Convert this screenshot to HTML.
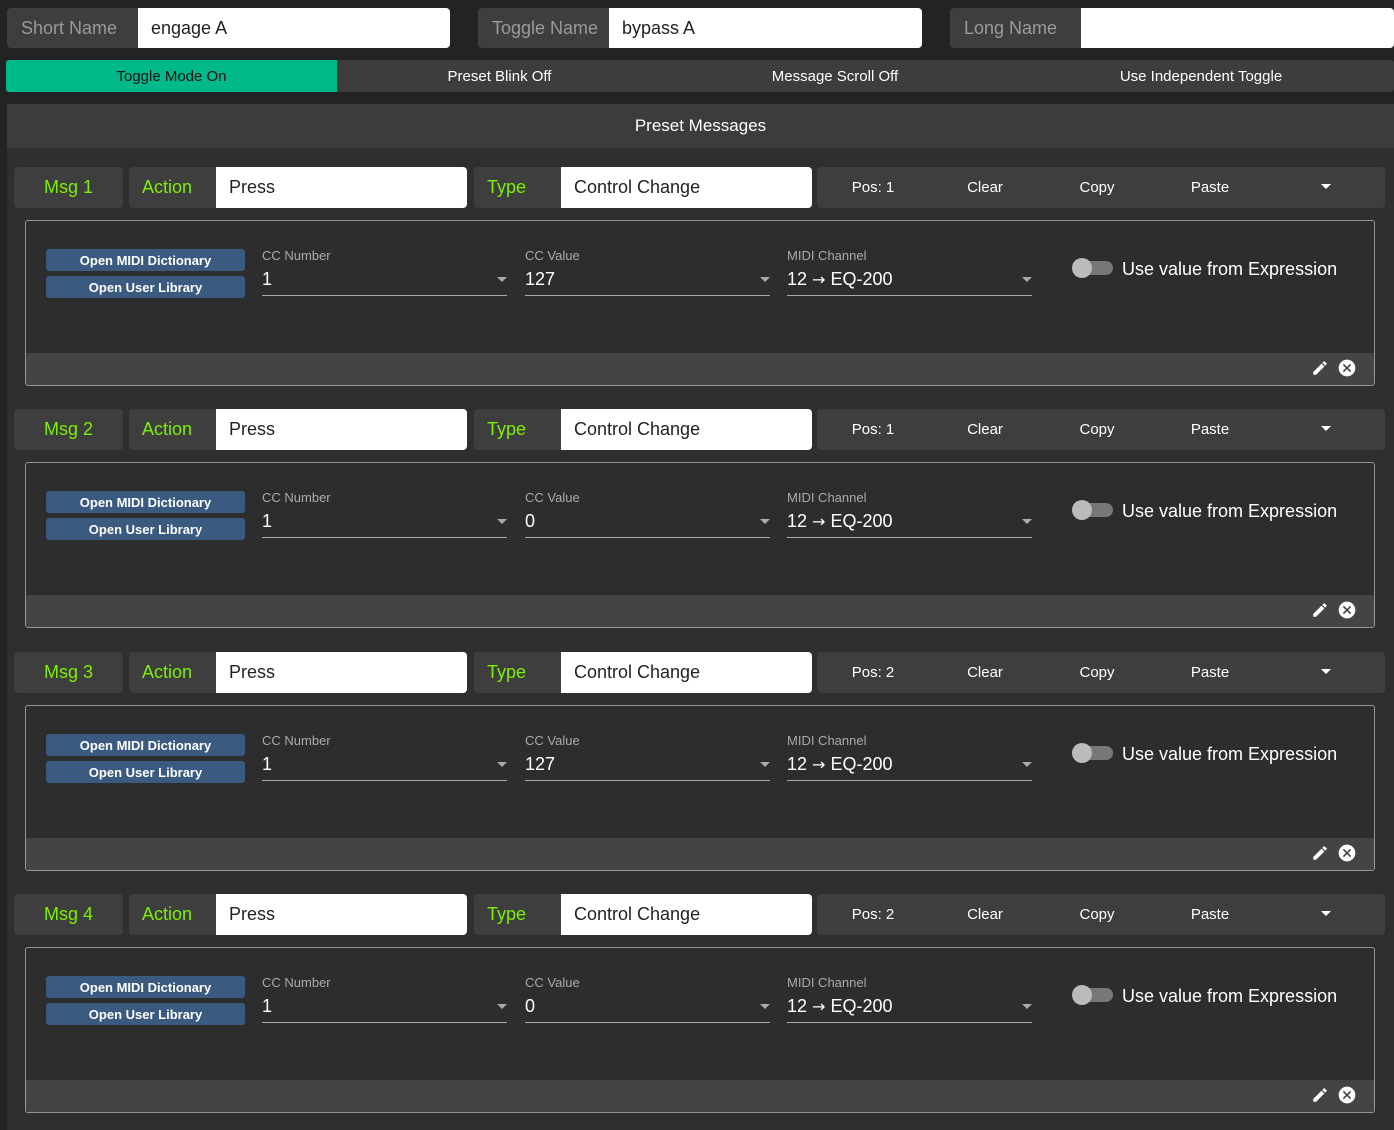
<!DOCTYPE html>
<html><head><meta charset="utf-8"><style>
*{box-sizing:border-box;margin:0;padding:0}
body{width:1394px;height:1130px;background:#232323;font-family:"Liberation Sans",sans-serif;position:relative;overflow:hidden}
.a{position:absolute}
.lbl{position:absolute;background:#3e3e3e;border-radius:4px;color:#9a9a9a;font-size:18px;display:flex;align-items:center;padding-left:14px}
.inp{position:absolute;background:#fff;border-radius:0 4px 4px 0;color:#222;font-size:18px;display:flex;align-items:center;padding-left:13px}
.tb{position:absolute;top:60px;height:32px;display:flex;align-items:center;justify-content:center;font-size:15px;color:#fff}
.blk{position:absolute;left:0;width:1394px;height:220px}
.g{color:#7cf000;justify-content:center;padding-left:0}
.bar{position:absolute;left:817px;top:0;width:568px;height:41px;background:#3e3e3e;border-radius:4px;color:#fff;font-size:15px}
.bar span{position:absolute;top:12px;transform:translateX(-50%)}
.box{position:absolute;left:25px;top:53px;width:1350px;height:166px;border:1px solid #8f959c;border-radius:3px;background:#2d2d2d;overflow:hidden}
.ft{position:absolute;left:0;bottom:0;width:100%;height:32px;background:#444}
.btn{position:absolute;left:20px;width:199px;height:22px;background:#3a5a80;border-radius:3px;color:#fff;font-size:13px;font-weight:bold;display:flex;align-items:center;justify-content:center}
.fld{position:absolute;top:25px;width:245px;height:50px;border-bottom:1px solid #aaa}
.fld .l{position:absolute;top:2px;left:0;font-size:13px;color:#aaa}
.fld .v{position:absolute;top:23px;left:0;font-size:18px;color:#fff}
.fld .v b{font-family:"DejaVu Sans",sans-serif;font-weight:normal;font-size:16px}
.fld .ar{position:absolute;right:0;top:31px;width:0;height:0;border-left:5px solid transparent;border-right:5px solid transparent;border-top:5px solid #aaa}
.tg{position:absolute;left:1047px;top:40px;width:40px;height:14px;border-radius:7px;background:#777}
.tg:before{content:"";position:absolute;left:-1px;top:-3px;width:20px;height:20px;border-radius:50%;background:#bbb}
.tt{position:absolute;left:1096px;top:38px;font-size:18px;color:#fff}
.act{justify-content:flex-start;padding-left:13px}
</style></head><body>
<div class="lbl" style="left:7px;top:8px;width:140px;height:40px;">Short Name</div>
<div class="inp" style="left:138px;top:8px;width:312px;height:40px;">engage A</div>
<div class="lbl" style="left:478px;top:8px;width:140px;height:40px;">Toggle Name</div>
<div class="inp" style="left:609px;top:8px;width:313px;height:40px;">bypass A</div>
<div class="lbl" style="left:950px;top:8px;width:140px;height:40px;">Long Name</div>
<div class="inp" style="left:1081px;top:8px;width:313px;height:40px;"></div>

<div class="a" style="left:6px;top:60px;width:1388px;height:32px;background:#3d3d3d;border-radius:3px"></div>
<div class="tb" style="left:6px;width:331px;background:#00b98a;color:#111;border-radius:3px 0 0 3px">Toggle Mode On</div>
<div class="tb" style="left:337px;width:325px">Preset Blink Off</div>
<div class="tb" style="left:670px;width:330px">Message Scroll Off</div>
<div class="tb" style="left:1010px;width:382px">Use Independent Toggle</div>

<div class="a" style="left:7px;top:104px;width:1387px;height:1026px;background:#2f2f2f"></div>
<div class="a" style="left:7px;top:104px;width:1387px;height:44px;background:#3c3c3c;color:#fff;font-size:17px;display:flex;align-items:center;justify-content:center">Preset Messages</div>

<div class="blk" style="top:167px">
<div class="lbl g" style="left:14px;top:0;width:109px;height:41px">Msg 1</div>
<div class="lbl g act" style="left:129px;top:0;width:95px;height:41px">Action</div>
<div class="inp" style="left:216px;top:0;width:251px;height:41px">Press</div>
<div class="lbl g act" style="left:474px;top:0;width:95px;height:41px">Type</div>
<div class="inp" style="left:561px;top:0;width:251px;height:41px">Control Change</div>
<div class="bar"><span style="left:56px">Pos: 1</span><span style="left:168px">Clear</span><span style="left:280px">Copy</span><span style="left:393px">Paste</span><i class="a" style="left:504px;top:17px;border-left:5px solid transparent;border-right:5px solid transparent;border-top:5px solid #fff"></i></div>
<div class="box">
<div class="btn" style="top:28px">Open MIDI Dictionary</div>
<div class="btn" style="top:55px">Open User Library</div>
<div class="fld" style="left:236px"><div class="l">CC Number</div><div class="v">1</div><i class="ar"></i></div>
<div class="fld" style="left:499px"><div class="l">CC Value</div><div class="v">127</div><i class="ar"></i></div>
<div class="fld" style="left:761px"><div class="l">MIDI Channel</div><div class="v">12 <b>→</b> EQ-200</div><i class="ar"></i></div>
<div class="tg"></div><div class="tt">Use value from Expression</div>
<div class="ft"><svg class="a" style="left:1285px;top:6px" width="18" height="18" viewBox="0 0 24 24"><path fill="#fff" d="M3 17.25V21h3.75L17.81 9.94l-3.75-3.75L3 17.25zM20.71 7.04a1 1 0 000-1.41l-2.34-2.34a1 1 0 00-1.41 0l-1.83 1.83 3.75 3.75 1.83-1.83z"/></svg><svg class="a" style="left:1311px;top:5px" width="20" height="20" viewBox="0 0 24 24"><path fill="#fff" d="M12 2a10 10 0 100 20 10 10 0 000-20zm5 13.59L15.59 17 12 13.41 8.41 17 7 15.59 10.59 12 7 8.41 8.41 7 12 10.59 15.59 7 17 8.41 13.41 12 17 15.59z"/></svg></div>
</div></div>

<div class="blk" style="top:409px">
<div class="lbl g" style="left:14px;top:0;width:109px;height:41px">Msg 2</div>
<div class="lbl g act" style="left:129px;top:0;width:95px;height:41px">Action</div>
<div class="inp" style="left:216px;top:0;width:251px;height:41px">Press</div>
<div class="lbl g act" style="left:474px;top:0;width:95px;height:41px">Type</div>
<div class="inp" style="left:561px;top:0;width:251px;height:41px">Control Change</div>
<div class="bar"><span style="left:56px">Pos: 1</span><span style="left:168px">Clear</span><span style="left:280px">Copy</span><span style="left:393px">Paste</span><i class="a" style="left:504px;top:17px;border-left:5px solid transparent;border-right:5px solid transparent;border-top:5px solid #fff"></i></div>
<div class="box">
<div class="btn" style="top:28px">Open MIDI Dictionary</div>
<div class="btn" style="top:55px">Open User Library</div>
<div class="fld" style="left:236px"><div class="l">CC Number</div><div class="v">1</div><i class="ar"></i></div>
<div class="fld" style="left:499px"><div class="l">CC Value</div><div class="v">0</div><i class="ar"></i></div>
<div class="fld" style="left:761px"><div class="l">MIDI Channel</div><div class="v">12 <b>→</b> EQ-200</div><i class="ar"></i></div>
<div class="tg"></div><div class="tt">Use value from Expression</div>
<div class="ft"><svg class="a" style="left:1285px;top:6px" width="18" height="18" viewBox="0 0 24 24"><path fill="#fff" d="M3 17.25V21h3.75L17.81 9.94l-3.75-3.75L3 17.25zM20.71 7.04a1 1 0 000-1.41l-2.34-2.34a1 1 0 00-1.41 0l-1.83 1.83 3.75 3.75 1.83-1.83z"/></svg><svg class="a" style="left:1311px;top:5px" width="20" height="20" viewBox="0 0 24 24"><path fill="#fff" d="M12 2a10 10 0 100 20 10 10 0 000-20zm5 13.59L15.59 17 12 13.41 8.41 17 7 15.59 10.59 12 7 8.41 8.41 7 12 10.59 15.59 7 17 8.41 13.41 12 17 15.59z"/></svg></div>
</div></div>

<div class="blk" style="top:652px">
<div class="lbl g" style="left:14px;top:0;width:109px;height:41px">Msg 3</div>
<div class="lbl g act" style="left:129px;top:0;width:95px;height:41px">Action</div>
<div class="inp" style="left:216px;top:0;width:251px;height:41px">Press</div>
<div class="lbl g act" style="left:474px;top:0;width:95px;height:41px">Type</div>
<div class="inp" style="left:561px;top:0;width:251px;height:41px">Control Change</div>
<div class="bar"><span style="left:56px">Pos: 2</span><span style="left:168px">Clear</span><span style="left:280px">Copy</span><span style="left:393px">Paste</span><i class="a" style="left:504px;top:17px;border-left:5px solid transparent;border-right:5px solid transparent;border-top:5px solid #fff"></i></div>
<div class="box">
<div class="btn" style="top:28px">Open MIDI Dictionary</div>
<div class="btn" style="top:55px">Open User Library</div>
<div class="fld" style="left:236px"><div class="l">CC Number</div><div class="v">1</div><i class="ar"></i></div>
<div class="fld" style="left:499px"><div class="l">CC Value</div><div class="v">127</div><i class="ar"></i></div>
<div class="fld" style="left:761px"><div class="l">MIDI Channel</div><div class="v">12 <b>→</b> EQ-200</div><i class="ar"></i></div>
<div class="tg"></div><div class="tt">Use value from Expression</div>
<div class="ft"><svg class="a" style="left:1285px;top:6px" width="18" height="18" viewBox="0 0 24 24"><path fill="#fff" d="M3 17.25V21h3.75L17.81 9.94l-3.75-3.75L3 17.25zM20.71 7.04a1 1 0 000-1.41l-2.34-2.34a1 1 0 00-1.41 0l-1.83 1.83 3.75 3.75 1.83-1.83z"/></svg><svg class="a" style="left:1311px;top:5px" width="20" height="20" viewBox="0 0 24 24"><path fill="#fff" d="M12 2a10 10 0 100 20 10 10 0 000-20zm5 13.59L15.59 17 12 13.41 8.41 17 7 15.59 10.59 12 7 8.41 8.41 7 12 10.59 15.59 7 17 8.41 13.41 12 17 15.59z"/></svg></div>
</div></div>

<div class="blk" style="top:894px">
<div class="lbl g" style="left:14px;top:0;width:109px;height:41px">Msg 4</div>
<div class="lbl g act" style="left:129px;top:0;width:95px;height:41px">Action</div>
<div class="inp" style="left:216px;top:0;width:251px;height:41px">Press</div>
<div class="lbl g act" style="left:474px;top:0;width:95px;height:41px">Type</div>
<div class="inp" style="left:561px;top:0;width:251px;height:41px">Control Change</div>
<div class="bar"><span style="left:56px">Pos: 2</span><span style="left:168px">Clear</span><span style="left:280px">Copy</span><span style="left:393px">Paste</span><i class="a" style="left:504px;top:17px;border-left:5px solid transparent;border-right:5px solid transparent;border-top:5px solid #fff"></i></div>
<div class="box">
<div class="btn" style="top:28px">Open MIDI Dictionary</div>
<div class="btn" style="top:55px">Open User Library</div>
<div class="fld" style="left:236px"><div class="l">CC Number</div><div class="v">1</div><i class="ar"></i></div>
<div class="fld" style="left:499px"><div class="l">CC Value</div><div class="v">0</div><i class="ar"></i></div>
<div class="fld" style="left:761px"><div class="l">MIDI Channel</div><div class="v">12 <b>→</b> EQ-200</div><i class="ar"></i></div>
<div class="tg"></div><div class="tt">Use value from Expression</div>
<div class="ft"><svg class="a" style="left:1285px;top:6px" width="18" height="18" viewBox="0 0 24 24"><path fill="#fff" d="M3 17.25V21h3.75L17.81 9.94l-3.75-3.75L3 17.25zM20.71 7.04a1 1 0 000-1.41l-2.34-2.34a1 1 0 00-1.41 0l-1.83 1.83 3.75 3.75 1.83-1.83z"/></svg><svg class="a" style="left:1311px;top:5px" width="20" height="20" viewBox="0 0 24 24"><path fill="#fff" d="M12 2a10 10 0 100 20 10 10 0 000-20zm5 13.59L15.59 17 12 13.41 8.41 17 7 15.59 10.59 12 7 8.41 8.41 7 12 10.59 15.59 7 17 8.41 13.41 12 17 15.59z"/></svg></div>
</div></div>
</body></html>
